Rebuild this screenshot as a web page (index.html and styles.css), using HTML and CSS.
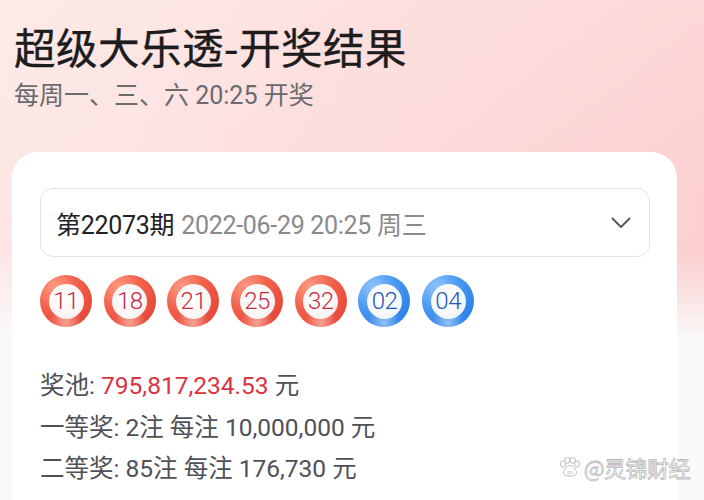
FILE: index.html
```html
<!DOCTYPE html>
<html lang="zh">
<head>
<meta charset="utf-8">
<link rel="stylesheet" href="styles.css">
</head>
<body>
<div class="page">
  <header class="head">
    <h1 class="title">超级大乐透-开奖结果</h1>
    <p class="sub">每周一、三、六 20:25 开奖</p>
  </header>
  <section class="card">
    <div class="select">
      <span class="issue">第22073期</span>
      <span class="date">2022-06-29 20:25 周三</span>
      <svg class="chev" width="20" height="12" viewBox="0 0 20 12"><path d="M1.5 1.5 L10 10 L18.5 1.5" fill="none" stroke="#555" stroke-width="1.8" stroke-linecap="round" stroke-linejoin="round"/></svg>
    </div>
    <div class="balls">
      <div class="ball red"><span>11</span></div>
      <div class="ball red"><span>18</span></div>
      <div class="ball red"><span>21</span></div>
      <div class="ball red"><span>25</span></div>
      <div class="ball red"><span>32</span></div>
      <div class="ball blue"><span>02</span></div>
      <div class="ball blue"><span>04</span></div>
    </div>
    <div class="info">
      <p class="line">奖池: <span class="money">795,817,234.53</span> 元</p>
      <p class="line">一等奖: 2注 每注 10,000,000 元</p>
      <p class="line">二等奖: 85注 每注 176,730 元</p>
    </div>
  </section>
  <div class="mark">
    <svg width="22" height="20" viewBox="0 0 22 20"><g fill="#fff" stroke="#bbb" stroke-width="1"><ellipse cx="4" cy="7" rx="2.6" ry="3.2"/><ellipse cx="8.3" cy="3.3" rx="2.6" ry="3"/><ellipse cx="13.7" cy="3.3" rx="2.6" ry="3"/><ellipse cx="18" cy="7" rx="2.6" ry="3.2"/><path d="M11 8.5 C8 8.5 4.5 13 4.5 15.5 C4.5 18 7 19 11 19 C15 19 17.5 18 17.5 15.5 C17.5 13 14 8.5 11 8.5 Z"/></g><text x="11" y="17" font-size="5" text-anchor="middle" fill="#bbb" font-family="Liberation Sans, sans-serif">du</text></svg>
    <span class="mark-text">@灵锦财经</span>
  </div>
</div>
</body>
</html>
```
FILE: styles.css
```css
* { box-sizing: border-box; }
html, body { margin: 0; padding: 0; }
body {
  width: 704px;
  height: 500px;
  overflow: hidden;
  font-family: Roboto, "Noto Sans CJK SC", sans-serif;
}
.page {
  position: relative;
  width: 704px;
  height: 500px;
  overflow: hidden;
  background:
    linear-gradient(to bottom, rgba(250,250,250,0) 0px, rgba(250,250,250,0) 250px, #fafafa 340px),
    linear-gradient(160deg, rgba(255,240,238,0.55) 0%, rgba(255,240,238,0.2) 40%, rgba(255,240,238,0) 60%),
    linear-gradient(150deg, rgba(0,0,0,0) 70%, rgba(245,180,180,0.25) 80%, rgba(0,0,0,0) 90%),
    linear-gradient(to right, #fce3e1 0%, #fbd6d5 55%, #fcd0d0 100%);
  padding: 21px 0 0 0;
}
.head { padding: 0 14px; }
.title {
  margin: 0;
  font-family: "Noto Sans CJK SC", sans-serif;
  font-weight: 400;
  font-size: 41.5px;
  line-height: 50px;
  color: #1c1c1e;
  letter-spacing: 0.5px;
  -webkit-text-stroke: 0.4px #1c1c1e;
}
.sub {
  margin: 9px 0 0 0;
  font-family: Roboto, "Noto Sans CJK SC", sans-serif;
  font-size: 25px;
  line-height: 32px;
  color: #6a6a6f;
}
.card {
  margin: 40px 27px 0 12px;
  background: #fff;
  border-radius: 26px 26px 0 0;
  height: 360px;
  padding: 36px 27px 0 28px;
}
.select {
  height: 69px;
  border: 1.5px solid #e3e3e3;
  border-radius: 13px;
  display: flex;
  align-items: center;
  padding: 0 18px 0 15px;
  font-size: 25px;
}
.issue { color: #222; letter-spacing: -0.3px; }
.date { color: #8a8a8e; margin-left: 7px; letter-spacing: -0.3px; }
.chev { margin-left: auto; }
.balls {
  display: flex;
  gap: 11.7px;
  margin-top: 18px;
}
.ball {
  width: 52px;
  height: 52px;
  border-radius: 50%;
  display: flex;
  align-items: center;
  justify-content: center;
  position: relative;
}
.ball.red {
  background:
    radial-gradient(circle at 50% 92%, rgba(255,220,210,0.6) 0%, rgba(255,220,210,0) 30%),
    radial-gradient(circle at 28% 22%, #ff9a82 0%, #f2624c 40%, #e84a38 75%, #e5503f 100%);
}
.ball.blue {
  background:
    radial-gradient(circle at 50% 92%, rgba(210,230,255,0.6) 0%, rgba(210,230,255,0) 30%),
    radial-gradient(circle at 28% 22%, #8ec3fb 0%, #4b9af0 40%, #2f82e6 75%, #3d8ce8 100%);
}
.ball span {
  width: 35px;
  height: 35px;
  border-radius: 50%;
  display: flex;
  align-items: center;
  justify-content: center;
  font-size: 24px;
  font-weight: 300;
  letter-spacing: -0.5px;
  background: radial-gradient(circle at 45% 40%, #ffffff 0%, #fbf6f6 60%, #eedede 100%);
}
.ball.red span { color: #c32b3f; }
.ball.blue span { color: #2557b8; background: radial-gradient(circle at 45% 40%, #ffffff 0%, #f4f7fc 60%, #dfe6f2 100%); }
.info { margin-top: 38px; }
.line {
  margin: 0;
  font-size: 24.5px;
  line-height: 41.5px;
  color: #505058;
}
.money { color: #d9343f; }
.mark {
  position: absolute;
  right: 14px;
  bottom: 17px;
  display: flex;
  align-items: center;
  gap: 3px;
}
.mark-text {
  font-family: "Noto Sans CJK SC", sans-serif;
  font-size: 22px;
  color: #ffffff;
  -webkit-text-stroke: 0.8px #b9b9b9;
  letter-spacing: -0.5px;
}
```
